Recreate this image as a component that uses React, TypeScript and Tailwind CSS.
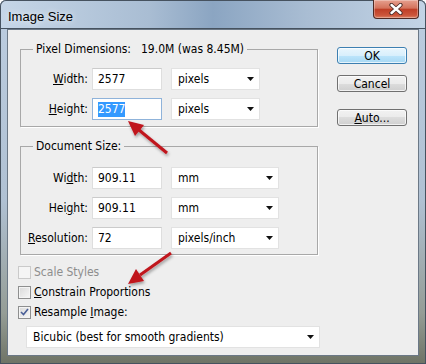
import React from "react";

const ui = "font-['DejaVu_Sans_Condensed','Liberation_Sans',sans-serif] text-[12px] text-black";

const Caret = () => (
  <svg width="7" height="4" viewBox="0 0 7 4">
    <path d="M0 0h7L3.5 4z" fill="#111" />
  </svg>
);

const TextBox = ({ value, focused }: { value: string; focused?: boolean }) => (
  <div
    className={`w-[70px] h-[22px] bg-white border flex items-center pl-[5px] ${
      focused ? "border-[#8fb3da]" : "border-[#dedede] border-t-[#cbcbcb]"
    }`}
  >
    {focused ? <span className="bg-[#3399ff] text-white leading-[15px]">{value}</span> : value}
  </div>
);

const Dropdown = ({ value, className }: { value: string; className: string }) => (
  <div
    className={`h-[22px] bg-white border border-[#e2e2e2] flex items-center justify-between pl-[6px] pr-[5px] ${className}`}
  >
    <span>{value}</span>
    <Caret />
  </div>
);

const FieldRow = ({
  label,
  value,
  unit,
  unitWidth,
  focused,
}: {
  label: React.ReactNode;
  value: string;
  unit: string;
  unitWidth: string;
  focused?: boolean;
}) => (
  <div className="flex items-center">
    <div className="w-[67px] text-right">{label}</div>
    <div className="ml-[4px]">
      <TextBox value={value} focused={focused} />
    </div>
    <div className="ml-[9px]">
      <Dropdown value={unit} className={unitWidth} />
    </div>
  </div>
);

const Check = ({ checked, disabled }: { checked?: boolean; disabled?: boolean }) => (
  <span
    className={`w-[13px] h-[13px] border flex items-center justify-center ${
      disabled
        ? "border-[#cacaca] bg-[#f5f5f5]"
        : "border-[#8e8f8f] bg-[linear-gradient(135deg,#d9d9d9,#f7f7f7)] shadow-[inset_0_0_0_1px_#f4f4f4]"
    }`}
  >
    {checked && (
      <svg width="9" height="8" viewBox="0 0 9 8">
        <path d="M1 4l2.5 2.5L8 1" fill="none" stroke="#4a5f97" strokeWidth="1.6" />
      </svg>
    )}
  </span>
);

const Button = ({ children, primary }: { children: React.ReactNode; primary?: boolean }) => (
  <button
    className={`w-[70px] h-[17px] rounded-[3px] border flex items-center justify-center leading-none ${
      primary
        ? "border-[#3c7fb1] bg-[linear-gradient(#e9f6fd,#d8effc_50%,#bde5fb_50%,#a6d8f4)]"
        : "border-[#707070] bg-[linear-gradient(#f2f2f2,#ebebeb_50%,#dddddd_50%,#cfcfcf)]"
    } shadow-[inset_0_0_0_1px_rgba(255,255,255,0.7)]`}
  >
    {children}
  </button>
);

const Arrows = () => (
  <svg className="absolute inset-0 pointer-events-none" width="426" height="364">
    <defs>
      <filter id="sh" x="-20%" y="-20%" width="140%" height="140%">
        <feDropShadow dx="1" dy="2" stdDeviation="1.4" floodColor="#000" floodOpacity="0.35" />
      </filter>
    </defs>
    <g filter="url(#sh)" fill="#c0141c" stroke="#c0141c">
      <line x1="139" y1="130" x2="167" y2="153" strokeWidth="3" />
      <polygon points="128,121 135,136 144,125" strokeWidth="0" />
      <line x1="140" y1="275" x2="171" y2="253" strokeWidth="3" />
      <polygon points="128,284 144,281 136,269" strokeWidth="0" />
    </g>
  </svg>
);

export default function App() {
  return (
    <div className={`${ui} relative w-[426px] h-[364px] bg-white`}>
      <div className="w-[426px] h-[364px] flex flex-col rounded-t-[6px] bg-[linear-gradient(#bccde0,#b0c1d3_55%,#959d96_86%,#6e7365)] shadow-[inset_0_0_0_1px_#46525f]">
        <div className="h-[29px] flex items-start rounded-t-[6px] bg-[linear-gradient(90deg,#c6d6e7,#a9bdd3_35%,#8ba5c2_50%,#a9bdd3_72%,#c3d4e6)] shadow-[inset_0_0_0_1px_#46525f]">
          <span className="ml-[8px] mt-[7px] text-[13px] font-['Liberation_Sans',sans-serif] [text-shadow:0_0_6px_#fff]">
            Image Size
          </span>
          <div className="ml-auto mr-[7px] w-[46px] h-[19px] rounded-b-[4px] border border-t-0 border-[#4f2a24] bg-[linear-gradient(#e6a08f,#d4735c_45%,#bf3f27_52%,#cc563b_85%,#dc8467)] flex items-center justify-center shadow-[inset_0_0_0_1px_rgba(255,255,255,0.3)]">
            <svg width="14" height="12" viewBox="0 0 14 12">
              <path d="M2.5 2L11.5 10M11.5 2L2.5 10" stroke="#4a2c28" strokeWidth="4.2" strokeLinecap="round" />
              <path d="M2.5 2L11.5 10M11.5 2L2.5 10" stroke="#fff" strokeWidth="2.4" strokeLinecap="round" />
            </svg>
          </div>
        </div>

        <div className="flex-1 mx-[7px] mb-[8px] border border-[#6b7886] bg-[#eeeeee] flex">
          <div className="ml-[10px] w-[300px] flex flex-col">
            <fieldset className="mt-[11px] ml-[2px] w-[298px] border border-[#a8a8a8] pt-[11px] pb-[6px] shadow-[1px_1px_0_#fff]">
              <legend className="ml-[12px] px-[3px] leading-[16px]">
                Pixel Dimensions:<span className="ml-[10px]">19.0M (was 8.45M)</span>
              </legend>
              <div className="flex flex-col gap-[8px]">
                <FieldRow label={<><u>W</u>idth:</>} value="2577" unit="pixels" unitWidth="w-[89px]" />
                <FieldRow label={<><u>H</u>eight:</>} value="2577" unit="pixels" unitWidth="w-[89px]" focused />
              </div>
            </fieldset>

            <fieldset className="mt-[11px] ml-[2px] w-[298px] border border-[#a8a8a8] pt-[13px] pb-[5px] shadow-[1px_1px_0_#fff]">
              <legend className="ml-[12px] px-[3px] leading-[16px]">Document Size:</legend>
              <div className="flex flex-col gap-[8px]">
                <FieldRow label={<>Wi<u>d</u>th:</>} value="909.11" unit="mm" unitWidth="w-[108px]" />
                <FieldRow label={<>Hei<u>g</u>ht:</>} value="909.11" unit="mm" unitWidth="w-[108px]" />
                <FieldRow label={<><u>R</u>esolution:</>} value="72" unit="pixels/inch" unitWidth="w-[108px]" />
              </div>
            </fieldset>

            <div className="mt-[7px] flex flex-col">
              <div className="h-[20px] flex items-center gap-[3px] text-[#8d8d8d]">
                <Check disabled />
                <span>Scale Styles</span>
              </div>
              <div className="h-[20px] flex items-center gap-[3px]">
                <Check />
                <span><u>C</u>onstrain Proportions</span>
              </div>
              <div className="h-[20px] flex items-center gap-[3px]">
                <Check checked />
                <span>Resample <u>I</u>mage:</span>
              </div>
            </div>

            <div className="mt-[4px] ml-[8px]">
              <Dropdown value="Bicubic (best for smooth gradients)" className="w-[294px]" />
            </div>
          </div>

          <div className="ml-[19px] mt-[17px] flex flex-col">
            <Button primary>OK</Button>
            <div className="mt-[11px]">
              <Button>Cancel</Button>
            </div>
            <div className="mt-[17px]">
              <Button><u>A</u>uto...</Button>
            </div>
          </div>
        </div>
      </div>
      <Arrows />
    </div>
  );
}
